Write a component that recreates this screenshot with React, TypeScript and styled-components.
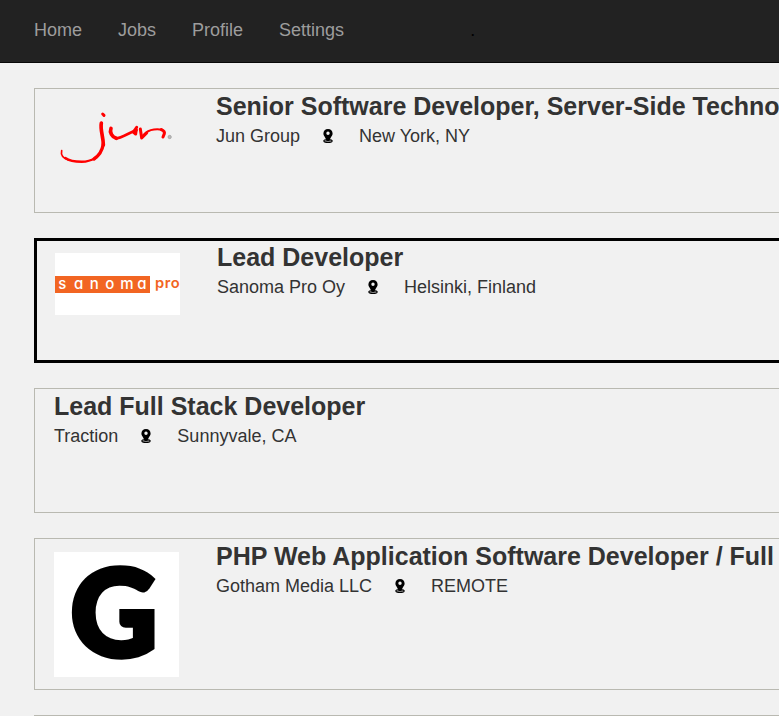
import React from "react";
import styled, { createGlobalStyle } from "styled-components";

const GlobalStyle = createGlobalStyle`
  * { box-sizing: border-box; }
  body {
    margin: 0;
    background: #f1f1f1;
    color: #333;
    font-family: "Liberation Sans", Arial, sans-serif;
    font-size: 18px;
    line-height: 30px;
  }
`;

const Page = styled.div`
  height: 100vh;
  overflow: hidden;
`;

const Navbar = styled.nav`
  display: flex;
  align-items: flex-start;
  gap: 36px;
  padding: 15px 34px 17px;
  background: #222;
  border-bottom: 1px solid #080808;
`;

const NavLink = styled.a`
  color: #9d9d9d;
  text-decoration: none;
  &:hover { color: #fff; }
`;

const NavMark = styled.span`
  margin-left: 90px;
  color: #000;
`;

const JobList = styled.main`
  display: flex;
  flex-direction: column;
  gap: 25px;
  width: max-content;
  min-width: 110%;
  padding: 25px 34px;
`;

const JobCard = styled.article<{ $selected?: boolean }>`
  display: flex;
  align-items: flex-start;
  gap: 37px;
  min-height: 125px;
  padding: ${(p) => (p.$selected ? "1px 18px 11px" : "2px 18px 12px 19px")};
  border: ${(p) => (p.$selected ? "3px solid #000" : "1px solid #b9b9b1")};
`;

const Logo = styled.svg`
  display: block;
  flex: none;
  width: 125px;
  margin-top: 11px;
`;

const JobTitle = styled.h2`
  margin: 0;
  font-size: 25px;
  line-height: 30px;
  font-weight: 700;
  white-space: nowrap;
`;

const JobMeta = styled.div`
  display: flex;
  align-items: center;
`;

const Pin = styled.svg`
  width: 10px;
  height: 14px;
  margin: 0 26px 0 23px;
`;

const PinIcon = () => (
  <Pin viewBox="0 0 10 14" aria-hidden="true">
    <ellipse cx="5" cy="12" rx="4.2" ry="1.5" fill="#888" stroke="#000" strokeWidth="1.2" />
    <path
      fill="#000"
      fillRule="evenodd"
      d="M5 0C2.2 0 0.4 1.9 0.4 4.5C0.4 7 2.8 8.4 3.6 12H6.4C7.2 8.4 9.6 7 9.6 4.5C9.6 1.9 7.8 0 5 0ZM5 2.6A1.7 1.7 0 1 1 5 6A1.7 1.7 0 0 1 5 2.6Z"
    />
  </Pin>
);

const JunLogo = () => (
  <Logo viewBox="72 66 375 201" role="img" aria-label="Jun Group">
    <g fill="none" stroke="#f00" strokeLinecap="round" strokeLinejoin="round">
      <path strokeWidth="5" d="M95 212C91 227 103 236 117 241" />
      <path strokeWidth="7" d="M106 234C121 245 145 246 166 245C180 242 190 239 200 232" />
      <path strokeWidth="10" d="M192 237C207 227 217 210 220 192" />
      <path strokeWidth="11" d="M214 129C210 150 220 169 220 195" />
      <path strokeWidth="9" d="M218 102L222 106" />
      <path strokeWidth="11" d="M243 145C238 157 246 171 259 175" />
      <path strokeWidth="8" d="M257 175C276 175 296 158 319 151" />
      <path strokeWidth="9" d="M320 142L310 156L317 162L319 148" />
      <path strokeWidth="9" d="M331 147L335 174L350 159" />
      <path strokeWidth="6" d="M337 169C349 151 373 144 397 149" />
      <path strokeWidth="9" d="M394 149C403 153 404 158 403 161L399 171" />
    </g>
    <circle cx="419" cy="171" r="5" fill="#bbb" stroke="#999" strokeWidth="2" />
  </Logo>
);

const LogoText = styled.text`
  font-family: Inter, sans-serif;
  font-feature-settings: "cv11";
`;

const SanomaLogo = () => (
  <Logo viewBox="0 0 375 186" role="img" aria-label="Sanoma Pro">
    <rect width="375" height="186" fill="#fff" />
    <rect y="69" width="285" height="51" fill="#f26522" />
    <LogoText x="10 57 104 151 196 247" y="107" fill="#fff" fontSize="45" fontWeight="500">
      sanoma
    </LogoText>
    <LogoText x="300 329 347" y="106" fill="#f26522" fontSize="44" fontWeight="600">
      pro
    </LogoText>
  </Logo>
);

const GothamText = styled.text`
  font-family: Lato, sans-serif;
  font-weight: 900;
  stroke: #000;
  stroke-linejoin: miter;
`;

const GothamLogo = () => (
  <Logo viewBox="0 0 375 375" role="img" aria-label="Gotham Media">
    <rect width="375" height="375" fill="#fff" />
    <GothamText x="180" y="313" textAnchor="middle" fontSize="360" strokeWidth="16">
      G
    </GothamText>
  </Logo>
);

interface Job {
  title: string;
  company: string;
  location: string;
  logo?: React.ReactNode;
  selected?: boolean;
}

const jobs: Job[] = [
  {
    title: "Senior Software Developer, Server-Side Technologies",
    company: "Jun Group",
    location: "New York, NY",
    logo: <JunLogo />,
  },
  {
    title: "Lead Developer",
    company: "Sanoma Pro Oy",
    location: "Helsinki, Finland",
    logo: <SanomaLogo />,
    selected: true,
  },
  { title: "Lead Full Stack Developer", company: "Traction", location: "Sunnyvale, CA" },
  {
    title: "PHP Web Application Software Developer / Full Stack",
    company: "Gotham Media LLC",
    location: "REMOTE",
    logo: <GothamLogo />,
  },
];

export default function App() {
  return (
    <Page>
      <GlobalStyle />
      <Navbar>
        <NavLink href="#home">Home</NavLink>
        <NavLink href="#jobs">Jobs</NavLink>
        <NavLink href="#profile">Profile</NavLink>
        <NavLink href="#settings">Settings</NavLink>
        <NavMark>.</NavMark>
      </Navbar>
      <JobList>
        {jobs.map((job) => (
          <JobCard key={job.title} $selected={job.selected}>
            {job.logo}
            <div>
              <JobTitle>{job.title}</JobTitle>
              <JobMeta>
                <span>{job.company}</span>
                <PinIcon />
                <span>{job.location}</span>
              </JobMeta>
            </div>
          </JobCard>
        ))}
        <JobCard />
      </JobList>
    </Page>
  );
}
